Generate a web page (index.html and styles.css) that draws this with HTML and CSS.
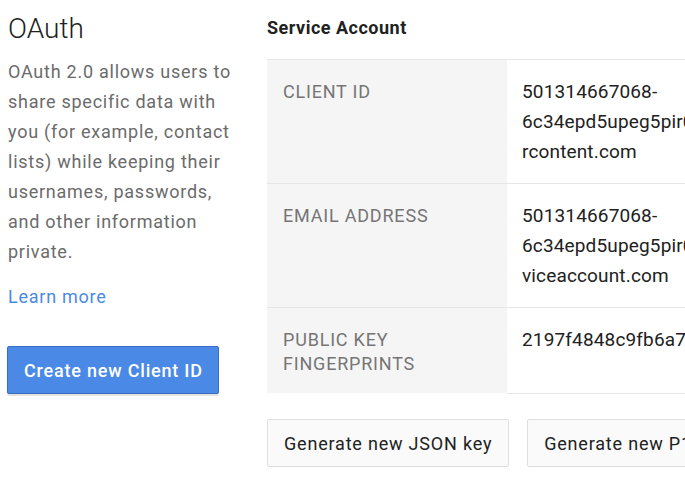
FILE: index.html
```html
<!DOCTYPE html>
<html lang="en">
<head>
<meta charset="utf-8">
<title>OAuth</title>
<link rel="stylesheet" href="styles.css">
</head>
<body>
<div class="page">
  <section class="intro">
    <h1 class="intro-title">OAuth</h1>
    <p class="intro-text">OAuth 2.0 allows users to share specific data with you (for example, contact lists) while keeping their usernames, passwords, and other information private.</p>
    <a class="intro-link" href="#">Learn more</a>
    <div class="intro-action">
      <button class="btn btn-primary" type="button">Create new Client ID</button>
    </div>
  </section>
  <section class="account">
    <h2 class="account-title">Service Account</h2>
    <table class="details">
      <tr>
        <th class="details-label">CLIENT ID</th>
        <td class="details-value">501314667068-<br>6c34epd5upeg5pir0c4kjva9ht1nq2m8.apps.googleuse<br>rcontent.com</td>
      </tr>
      <tr>
        <th class="details-label">EMAIL ADDRESS</th>
        <td class="details-value">501314667068-<br>6c34epd5upeg5pir0c4kjva9ht1nq2m8@developer.gser<br>viceaccount.com</td>
      </tr>
      <tr class="details-last">
        <th class="details-label">PUBLIC KEY<br>FINGERPRINTS</th>
        <td class="details-value">2197f4848c9fb6a7d3e10b52a8c4f6e91d07b3a5</td>
      </tr>
    </table>
    <div class="actions">
      <button class="btn btn-default" type="button">Generate new JSON key</button>
      <button class="btn btn-default" type="button">Generate new P12 key</button>
    </div>
  </section>
</div>
</body>
</html>
```

FILE: styles.css
```css
html, body {
  margin: 0;
  padding: 0;
  background: #ffffff;
  overflow: hidden;
}

body {
  font-family: Roboto, "Liberation Sans", Arial, sans-serif;
  color: #212121;
}

.page {
  display: flex;
  gap: 24px;
  padding: 12px 0 0 8px;
  width: 1200px;
}

.intro {
  flex: none;
  width: 235px;
  display: flex;
  flex-direction: column;
  align-items: flex-start;
}

.intro-title {
  margin: 0;
  font-size: 28px;
  line-height: 34px;
  font-weight: 300;
  color: #212121;
}

.intro-text {
  margin: 11px 0 0;
  font-size: 18px;
  line-height: 30px;
  letter-spacing: 0.75px;
  color: #6b6b6b;
}

.intro-link {
  margin-top: 15px;
  font-size: 18px;
  line-height: 30px;
  letter-spacing: 0.75px;
  color: #4a8ae4;
  text-decoration: none;
}

.intro-action {
  margin-top: 34px;
  margin-left: -1px;
}

.btn {
  font-family: Roboto, "Liberation Sans", Arial, sans-serif;
  font-size: 18px;
  line-height: 24px;
  letter-spacing: 0.8px;
  border-radius: 2px;
  padding: 12px 16px 10px;
  cursor: pointer;
  white-space: nowrap;
}

.btn-primary {
  background: #4a89e6;
  border: 1px solid #3a6cc0;
  color: #ffffff;
  font-weight: 500;
  padding-left: 16px;
  padding-right: 15px;
  box-shadow: 0 2px 1px rgba(0, 0, 0, 0.12);
}

.btn-default {
  background: #fafafa;
  border: 1px solid #dedede;
  color: #212121;
}

.account {
  flex: none;
  width: 900px;
}

.account-title {
  margin: 4px 0 0;
  font-size: 18px;
  line-height: 24px;
  font-weight: 700;
  letter-spacing: 0.5px;
  color: #212121;
}

.details {
  margin-top: 19px;
  border-collapse: collapse;
  width: 900px;
}

.details-label,
.details-value {
  border-top: 1px solid #e6e6e6;
  vertical-align: top;
  text-align: left;
}

.details-label {
  width: 240px;
  box-sizing: border-box;
  background: #f5f5f5;
  padding: 20px 16px 17px;
  font-size: 18px;
  line-height: 24px;
  font-weight: 400;
  letter-spacing: 0.8px;
  color: #757575;
}

.details-value {
  padding: 17px 15px 16px;
  font-size: 19px;
  line-height: 30px;
  letter-spacing: 0.15px;
  color: #212121;
  white-space: nowrap;
}

.details-last .details-value {
  border-bottom: 1px solid #e6e6e6;
}

.actions {
  display: flex;
  gap: 18px;
  margin-top: 25px;
}
```
